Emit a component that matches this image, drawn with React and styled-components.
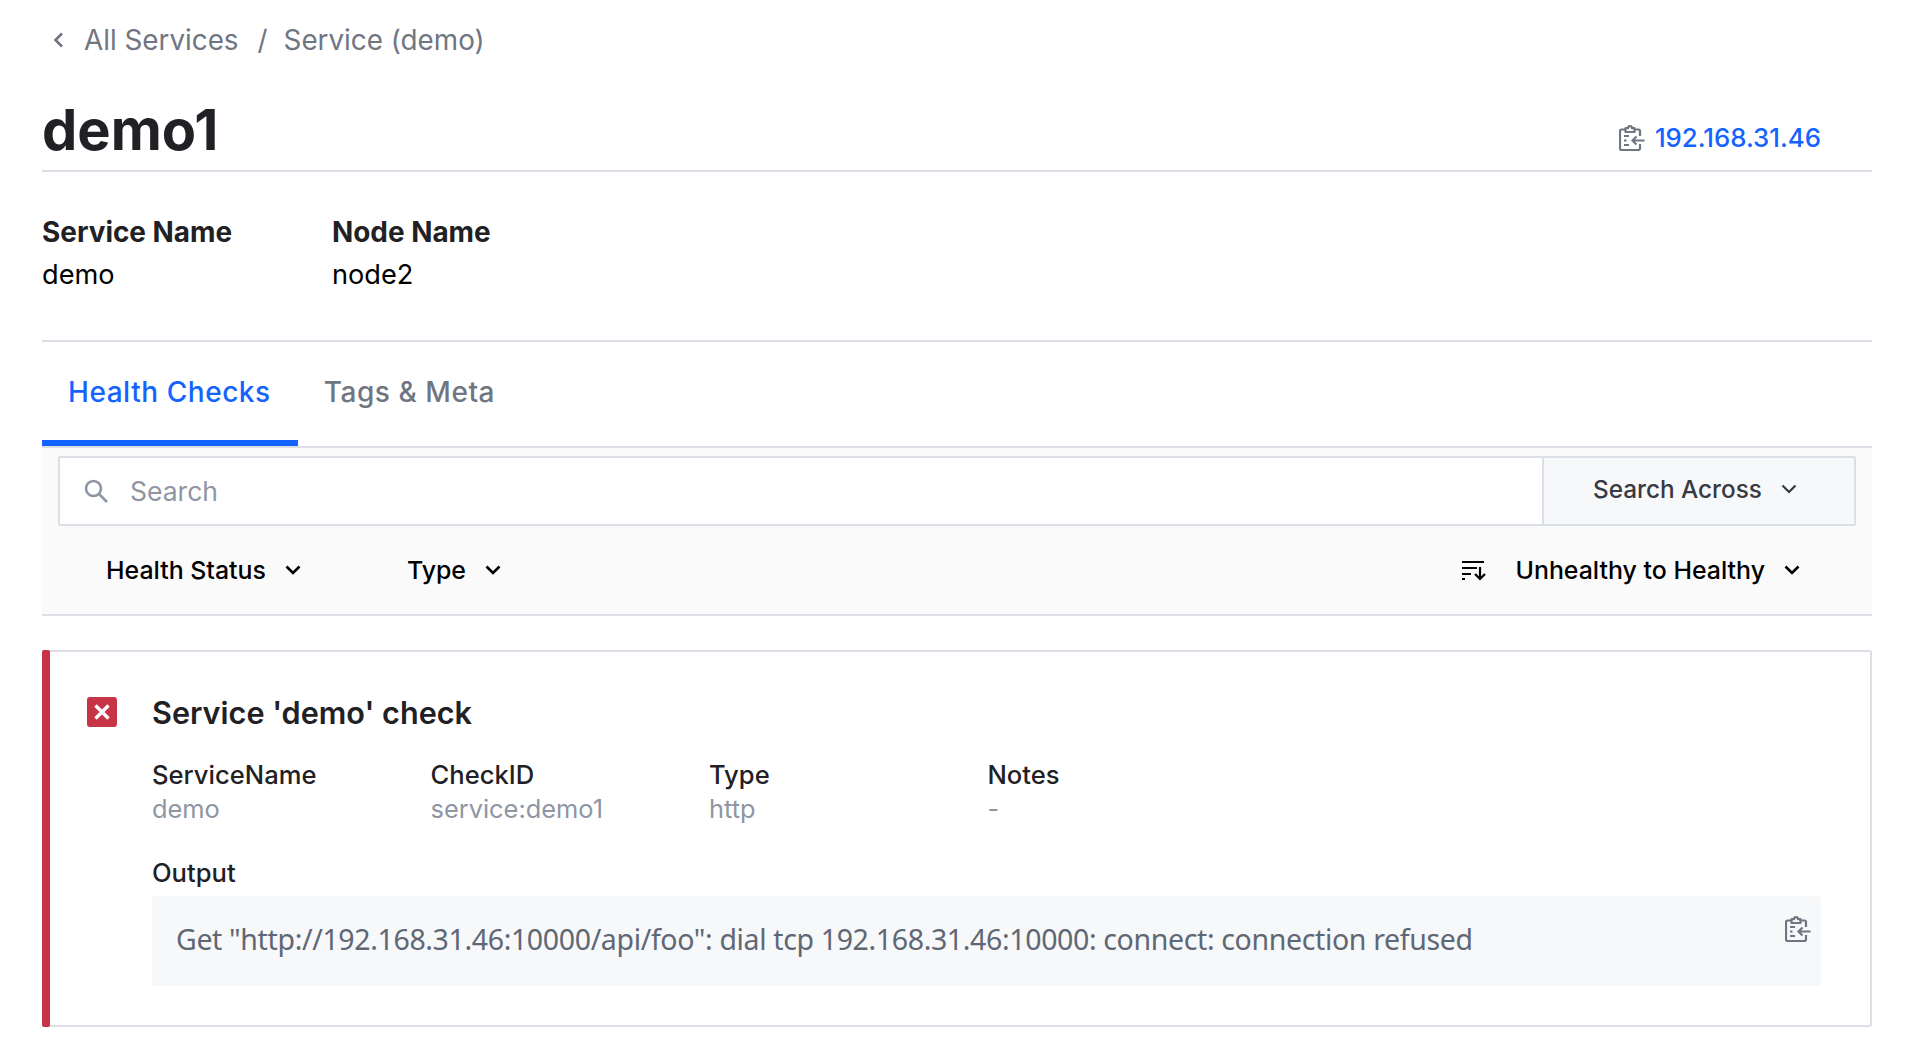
import React from "react";
import styled, { createGlobalStyle } from "styled-components";

const Global = createGlobalStyle`
  html, body { margin: 0; padding: 0; background: #fff; }
  body { font-family: Inter, "Liberation Sans", sans-serif; color: #1f2124; }
  * { box-sizing: border-box; }
`;
const Page = styled.div`
  width: 1906px; height: 1052px; overflow: hidden;
  padding: 0 34px 0 42px;
`;
const Crumbs = styled.nav`
  height: 80px; display: flex; align-items: center; padding-left: 9px;
  font-size: 27.8px; color: #6f7682; white-space: nowrap;
`;
const CrumbLink = styled.span`margin-left: ${p => p.$ml || 0}px;`;
const TitleRow = styled.header`
  height: 92px; display: flex; justify-content: space-between; align-items: flex-start;
  border-bottom: 2px solid #dce0e6;
`;
const Title = styled.h1`
  margin: 16px 0 0; font-size: 56px; font-weight: 700; line-height: 68px; color: #1f2124;
`;
const Address = styled.div`
  display: flex; align-items: center; gap: 10px; margin: 41px 51px 0 0;
  font-size: 25.8px; color: #1563ff; font-weight: 500; line-height: 34px;
`;
const Meta = styled.dl`
  margin: 0; height: 170px; display: flex; padding-top: 41px;
  border-bottom: 2px solid #dce0e6;
`;
const MetaItem = styled.div`width: ${p => p.$w}px;`;
const MetaKey = styled.dt`font-size: 27.9px; font-weight: 700; line-height: 38px; color: #1f2124;`;
const MetaValue = styled.dd`margin: 5px 0 0; font-size: 27.2px; line-height: 38px; color: #000;`;
const Tabs = styled.div`
  height: 106px; display: flex; border-bottom: 2px solid #dce0e6;
`;
const Tab = styled.div`
  height: 104px; padding: 2px 27px 0 26px; display: flex; align-items: center;
  font-size: 28px; font-weight: 500; letter-spacing: 0.55px;
  color: ${p => p.$active ? "#1563ff" : "#6f7682"};
  border-bottom: 6px solid ${p => p.$active ? "#1563ff" : "transparent"};
`;
const Toolbar = styled.section`
  height: 168px; background: #fafafb; padding: 8px 16px 0;
  border-bottom: 2px solid #dce0e6;
`;
const SearchBox = styled.div`
  height: 70px; display: flex; border: 2px solid #dce0e6; border-radius: 2px; background: #fff;
`;
const SearchField = styled.div`
  flex: 1; display: flex; align-items: center; padding: 0 0 1px 23px; gap: 21px;
  font-size: 26.5px; color: #8e96a3;
`;
const SearchAcross = styled.div`
  width: 312px; display: flex; align-items: center; padding: 0 0 4px 49px; gap: 19px;
  background: #f7f8fa; border-left: 2px solid #dce0e6;
  font-size: 24.3px; font-weight: 500; color: #373a42;
`;
const Filters = styled.div`
  height: 88px; display: flex; align-items: center; padding: 0 56px 0 30px;
  font-size: 24.9px; font-weight: 500; color: #000;
`;
const Filter = styled.div`
  display: flex; align-items: center; gap: 19px; margin-left: ${p => p.$ml || 0}px;
`;
const Spacer = styled.div`flex: 1;`;
const Card = styled.article`
  margin-top: 34px; height: 377px; display: flex;
  border: 2px solid #dce0e6; border-left: 0; border-radius: 3px;
`;
const Stripe = styled.div`
  width: 8px; margin: -2px 0; background: #c73445; border-radius: 2px; flex: none;
`;
const Status = styled.div`
  width: 102px; flex: none; padding: 45px 0 0 37px;
`;
const CheckBody = styled.div`
  flex: 1; padding-right: 49px; min-width: 0;
`;
const CheckTitle = styled.h2`
  margin: 41px 0 0; font-size: 30.6px; font-weight: 600; line-height: 40px; color: #1f2124;
`;
const Fields = styled.dl`
  margin: 25px 0 0; display: grid; grid-template-columns: repeat(4, 278.5px);
`;
const FieldKey = styled.dt`font-size: 25.6px; line-height: 34px; font-weight: 500; color: #1f2124;`;
const FieldValue = styled.dd`margin: 0; font-size: 25.4px; line-height: 34px; color: #8e96a3;`;
const OutputLabel = styled.div`
  margin-top: 30px; font-size: 25.6px; line-height: 34px; font-weight: 500; color: #1f2124;
`;
const OutputBox = styled.div`
  position: relative; margin-top: 6px; height: 90px; background: #f7f8fa; border-radius: 3px;
  padding: 0 0 4px 24px; display: flex; align-items: center;
  font-family: "Noto Sans", sans-serif; font-size: 28.5px; letter-spacing: -0.36px;
  color: #5f6775; white-space: nowrap;
`;
const CopyOverlay = styled.div`
  position: absolute; right: 10px; top: 20px; line-height: 0;
`;

const Clip = ({ size = 26 }) => (
  <svg width={size} height={size} viewBox="0 0 26 26" fill="none" stroke="#6f7682" strokeWidth="2.2">
    <path d="M16 4.5H19.5a1.5 1.5 0 0 1 1.5 1.5V11M21 19V23.5a1.5 1.5 0 0 1-1.5 1.5H2.5A1.5 1.5 0 0 1 1 23.5V6a1.5 1.5 0 0 1 1.5-1.5H6" />
    <path d="M6.5 7V3.2H9a2 2 0 0 1 4 0H15.5V7Z" strokeLinejoin="round" />
    <path d="M5 11h5M5 15.5h2.5M5 20h5" />
    <path d="M25.5 15.5H13.5M17.5 11.5l-4 4 4 4" />
  </svg>
);
const Chevron = ({ w = 16, color = "#000", sw = 2.6 }) => (
  <svg width={w} height={w} viewBox="0 0 16 16" fill="none" stroke={color} strokeWidth={sw}>
    <path d="M1.5 4.5L8 11l6.5-6.5" />
  </svg>
);
const Back = () => (
  <svg width="14" height="18" viewBox="0 0 14 18" fill="none" stroke="#6f7682" strokeWidth="2.6">
    <path d="M11 2.5L4.5 9l6.5 6.5" />
  </svg>
);
const Search = () => (
  <svg width="26" height="26" viewBox="0 0 26 26" fill="none" stroke="#8e96a3" strokeWidth="2.6">
    <circle cx="10.5" cy="10.5" r="7.5" />
    <path d="M16 16l8 8" />
  </svg>
);
const Sort = () => (
  <svg width="26" height="22" viewBox="0 0 26 22" fill="none" stroke="#000" strokeWidth="2.2">
    <path d="M1 3h22M1 9h15M1 15h9M1 20h3" />
    <path d="M19 8v12M14 15l5 5 5-5" />
  </svg>
);
const Fail = () => (
  <svg width="30" height="30" viewBox="0 0 30 30">
    <rect width="30" height="30" rx="3" fill="#c73445" />
    <path d="M8.5 8.5l13 13M21.5 8.5l-13 13" stroke="#fff" strokeWidth="3.4" fill="none" />
  </svg>
);

export default function App() {
  return (
    <Page>
      <Global />
      <Crumbs>
        <Back />
        <CrumbLink $ml={19}>All Services</CrumbLink>
        <CrumbLink $ml={19}>/</CrumbLink>
        <CrumbLink $ml={16}>Service (demo)</CrumbLink>
      </Crumbs>
      <TitleRow>
        <Title>demo1</Title>
        <Address><Clip />192.168.31.46</Address>
      </TitleRow>
      <Meta>
        <MetaItem $w={290}>
          <MetaKey>Service Name</MetaKey>
          <MetaValue>demo</MetaValue>
        </MetaItem>
        <MetaItem $w={290}>
          <MetaKey>Node Name</MetaKey>
          <MetaValue>node2</MetaValue>
        </MetaItem>
      </Meta>
      <Tabs>
        <Tab $active>Health Checks</Tab>
        <Tab>Tags &amp; Meta</Tab>
      </Tabs>
      <Toolbar>
        <SearchBox>
          <SearchField><Search />Search</SearchField>
          <SearchAcross>Search Across <Chevron color="#373a42" sw={2.2} /></SearchAcross>
        </SearchBox>
        <Filters>
          <Filter $ml={18}>Health Status <Chevron /></Filter>
          <Filter $ml={106}>Type <Chevron /></Filter>
          <Spacer />
          <Filter><Sort /></Filter>
          <Filter $ml={28}>Unhealthy to Healthy <Chevron /></Filter>
        </Filters>
      </Toolbar>
      <Card>
        <Stripe />
        <Status><Fail /></Status>
        <CheckBody>
          <CheckTitle>Service 'demo' check</CheckTitle>
          <Fields>
            <div><FieldKey>ServiceName</FieldKey><FieldValue>demo</FieldValue></div>
            <div><FieldKey>CheckID</FieldKey><FieldValue>service:demo1</FieldValue></div>
            <div><FieldKey>Type</FieldKey><FieldValue>http</FieldValue></div>
            <div><FieldKey>Notes</FieldKey><FieldValue>-</FieldValue></div>
          </Fields>
          <OutputLabel>Output</OutputLabel>
          <OutputBox>
            Get "http://192.168.31.46:10000/api/foo": dial tcp 192.168.31.46:10000: connect: connection refused
            <CopyOverlay><Clip /></CopyOverlay>
          </OutputBox>
        </CheckBody>
      </Card>
    </Page>
  );
}
